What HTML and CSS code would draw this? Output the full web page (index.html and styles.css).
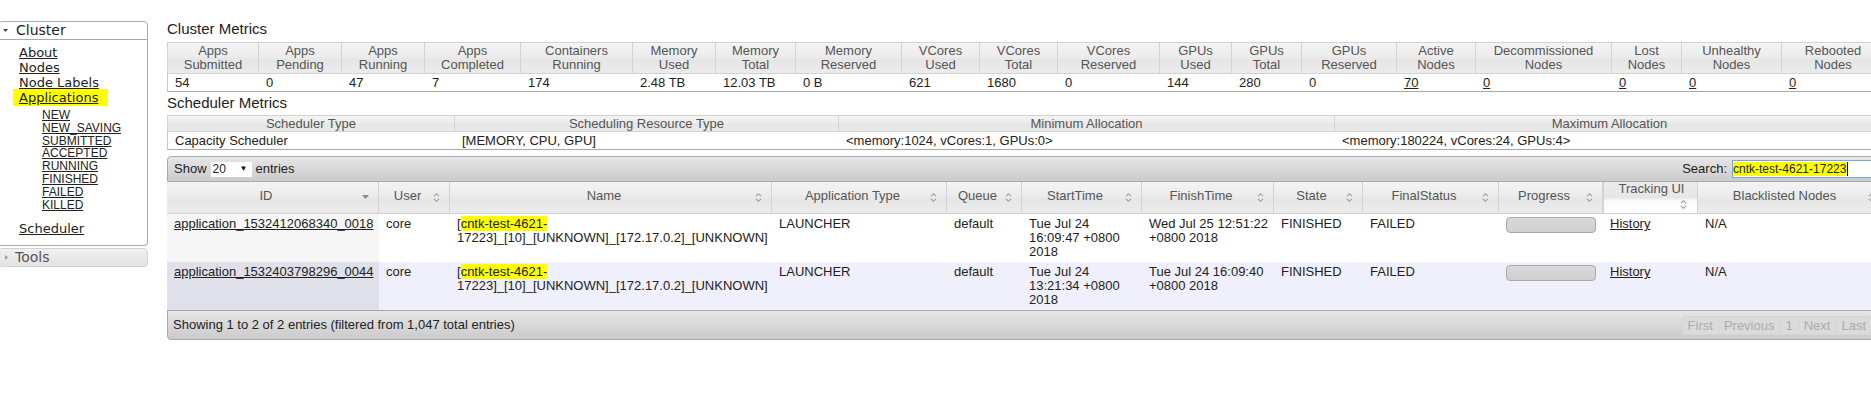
FILE: index.html
```html
<!DOCTYPE html>
<html>
<head>
<meta charset="utf-8">
<title>All Applications</title>
<link rel="stylesheet" href="styles.css">
</head>
<body>
<div class="page">
  <nav class="nav">
    <div class="acc-head open"><span class="tri"><svg width="5" height="3" viewBox="0 0 5 3"><polygon points="0,0 5,0 2.5,3" fill="#444"/></svg></span>Cluster</div>
    <div class="acc-body">
      <ul class="nav-main">
        <li><a href="#">About</a></li>
        <li><a href="#">Nodes</a></li>
        <li><a href="#">Node Labels</a></li>
        <li><a href="#" class="hl">Applications</a>
          <ul class="nav-sub">
            <li><a href="#">NEW</a></li>
            <li><a href="#">NEW_SAVING</a></li>
            <li><a href="#">SUBMITTED</a></li>
            <li><a href="#">ACCEPTED</a></li>
            <li><a href="#">RUNNING</a></li>
            <li><a href="#">FINISHED</a></li>
            <li><a href="#">FAILED</a></li>
            <li><a href="#">KILLED</a></li>
          </ul>
        </li>
        <li class="sched"><a href="#">Scheduler</a></li>
      </ul>
    </div>
    <div class="acc-head closed"><span class="tri"><svg width="3" height="5" viewBox="0 0 3 5"><polygon points="0,0 3,2.5 0,5" fill="#999"/></svg></span>Tools</div>
  </nav>

  <main class="main">
    <h3 class="title">Cluster Metrics</h3>
    <table class="metrics cluster">
      <colgroup>
        <col style="width:92px"><col style="width:83px"><col style="width:83px"><col style="width:96px"><col style="width:112px"><col style="width:83px"><col style="width:80px"><col style="width:106px"><col style="width:78px"><col style="width:78px"><col style="width:102px"><col style="width:72px"><col style="width:70px"><col style="width:95px"><col style="width:79px"><col style="width:136px"><col style="width:70px"><col style="width:100px"><col style="width:103px">
      </colgroup>
      <thead>
        <tr>
          <th>Apps<br>Submitted</th><th>Apps<br>Pending</th><th>Apps<br>Running</th><th>Apps<br>Completed</th><th>Containers<br>Running</th><th>Memory<br>Used</th><th>Memory<br>Total</th><th>Memory<br>Reserved</th><th>VCores<br>Used</th><th>VCores<br>Total</th><th>VCores<br>Reserved</th><th>GPUs<br>Used</th><th>GPUs<br>Total</th><th>GPUs<br>Reserved</th><th>Active<br>Nodes</th><th>Decommissioned<br>Nodes</th><th>Lost<br>Nodes</th><th>Unhealthy<br>Nodes</th><th>Rebooted<br>Nodes</th>
        </tr>
      </thead>
      <tbody>
        <tr>
          <td>54</td><td>0</td><td>47</td><td>7</td><td>174</td><td>2.48 TB</td><td>12.03 TB</td><td>0 B</td><td>621</td><td>1680</td><td>0</td><td>144</td><td>280</td><td>0</td><td><a href="#">70</a></td><td><a href="#">0</a></td><td><a href="#">0</a></td><td><a href="#">0</a></td><td><a href="#">0</a></td>
        </tr>
      </tbody>
    </table>

    <h3 class="title title2">Scheduler Metrics</h3>
    <table class="metrics sched">
      <colgroup>
        <col style="width:288px"><col style="width:384px"><col style="width:496px"><col style="width:550px">
      </colgroup>
      <thead>
        <tr><th>Scheduler Type</th><th>Scheduling Resource Type</th><th>Minimum Allocation</th><th>Maximum Allocation</th></tr>
      </thead>
      <tbody>
        <tr><td>Capacity Scheduler</td><td>[MEMORY, CPU, GPU]</td><td>&lt;memory:1024, vCores:1, GPUs:0&gt;</td><td>&lt;memory:180224, vCores:24, GPUs:4&gt;</td></tr>
      </tbody>
    </table>

    <div class="dt">
      <div class="bar bar-top">
        <div class="len">Show <span class="sel"><span>20</span><span class="sel-arrow">&#9660;</span></span> entries</div>
        <div class="filter">Search: <span class="search"><span class="search-text">cntk-test-4621-17223</span><span class="caret"></span></span></div>
      </div>
      <table class="apps">
        <colgroup>
          <col style="width:212px"><col style="width:71px"><col style="width:322px"><col style="width:175px"><col style="width:75px"><col style="width:120px"><col style="width:132px"><col style="width:89px"><col style="width:136px"><col style="width:104px"><col style="width:95px"><col style="width:187px">
        </colgroup>
        <thead>
          <tr>
            <th>ID<span class="sort"><svg width="7" height="4" viewBox="0 0 7 4"><polygon points="0,0 7,0 3.5,4" fill="#8a8a8a"/></svg></span></th>
            <th>User<span class="sort"><svg width="7" height="11" viewBox="0 0 7 11"><path d="M1 4.2 L3.5 1.7 L6 4.2 M1 6.8 L3.5 9.3 L6 6.8" stroke="#9c9c9c" stroke-width="1.1" fill="none"/></svg></span></th>
            <th>Name<span class="sort"><svg width="7" height="11" viewBox="0 0 7 11"><path d="M1 4.2 L3.5 1.7 L6 4.2 M1 6.8 L3.5 9.3 L6 6.8" stroke="#9c9c9c" stroke-width="1.1" fill="none"/></svg></span></th>
            <th>Application Type<span class="sort"><svg width="7" height="11" viewBox="0 0 7 11"><path d="M1 4.2 L3.5 1.7 L6 4.2 M1 6.8 L3.5 9.3 L6 6.8" stroke="#9c9c9c" stroke-width="1.1" fill="none"/></svg></span></th>
            <th>Queue<span class="sort"><svg width="7" height="11" viewBox="0 0 7 11"><path d="M1 4.2 L3.5 1.7 L6 4.2 M1 6.8 L3.5 9.3 L6 6.8" stroke="#9c9c9c" stroke-width="1.1" fill="none"/></svg></span></th>
            <th>StartTime<span class="sort"><svg width="7" height="11" viewBox="0 0 7 11"><path d="M1 4.2 L3.5 1.7 L6 4.2 M1 6.8 L3.5 9.3 L6 6.8" stroke="#9c9c9c" stroke-width="1.1" fill="none"/></svg></span></th>
            <th>FinishTime<span class="sort"><svg width="7" height="11" viewBox="0 0 7 11"><path d="M1 4.2 L3.5 1.7 L6 4.2 M1 6.8 L3.5 9.3 L6 6.8" stroke="#9c9c9c" stroke-width="1.1" fill="none"/></svg></span></th>
            <th>State<span class="sort"><svg width="7" height="11" viewBox="0 0 7 11"><path d="M1 4.2 L3.5 1.7 L6 4.2 M1 6.8 L3.5 9.3 L6 6.8" stroke="#9c9c9c" stroke-width="1.1" fill="none"/></svg></span></th>
            <th>FinalStatus<span class="sort"><svg width="7" height="11" viewBox="0 0 7 11"><path d="M1 4.2 L3.5 1.7 L6 4.2 M1 6.8 L3.5 9.3 L6 6.8" stroke="#9c9c9c" stroke-width="1.1" fill="none"/></svg></span></th>
            <th>Progress<span class="sort"><svg width="7" height="11" viewBox="0 0 7 11"><path d="M1 4.2 L3.5 1.7 L6 4.2 M1 6.8 L3.5 9.3 L6 6.8" stroke="#9c9c9c" stroke-width="1.1" fill="none"/></svg></span></th>
            <th class="trk">Tracking UI<span class="sort"><svg width="7" height="11" viewBox="0 0 7 11"><path d="M1 4.2 L3.5 1.7 L6 4.2 M1 6.8 L3.5 9.3 L6 6.8" stroke="#9c9c9c" stroke-width="1.1" fill="none"/></svg></span></th>
            <th>Blacklisted Nodes<span class="sort"><svg width="7" height="11" viewBox="0 0 7 11"><path d="M1 4.2 L3.5 1.7 L6 4.2 M1 6.8 L3.5 9.3 L6 6.8" stroke="#9c9c9c" stroke-width="1.1" fill="none"/></svg></span></th>
          </tr>
        </thead>
        <tbody>
          <tr class="odd">
            <td class="sorted"><a href="#">application_1532412068340_0018</a></td>
            <td>core</td>
            <td>[<span class="mark">cntk-test-4621-</span><wbr>17223]_[10]_[UNKNOWN]_[172.17.0.2]_[UNKNOWN]</td>
            <td>LAUNCHER</td>
            <td>default</td>
            <td>Tue Jul 24 16:09:47 +0800 2018</td>
            <td>Wed Jul 25 12:51:22 +0800 2018</td>
            <td>FINISHED</td>
            <td>FAILED</td>
            <td><div class="progress"></div></td>
            <td><a href="#">History</a></td>
            <td>N/A</td>
          </tr>
          <tr class="even">
            <td class="sorted"><a href="#">application_1532403798296_0044</a></td>
            <td>core</td>
            <td>[<span class="mark">cntk-test-4621-</span><wbr>17223]_[10]_[UNKNOWN]_[172.17.0.2]_[UNKNOWN]</td>
            <td>LAUNCHER</td>
            <td>default</td>
            <td>Tue Jul 24 13:21:34 +0800 2018</td>
            <td>Tue Jul 24 16:09:40 +0800 2018</td>
            <td>FINISHED</td>
            <td>FAILED</td>
            <td><div class="progress"></div></td>
            <td><a href="#">History</a></td>
            <td>N/A</td>
          </tr>
        </tbody>
      </table>
      <div class="bar bar-bottom">
        <div class="info">Showing 1 to 2 of 2 entries (filtered from 1,047 total entries)</div>
        <div class="pager"><span>First</span><span>Previous</span><span>1</span><span>Next</span><span>Last</span></div>
      </div>
    </div>
  </main>
</div>
</body>
</html>
```
FILE: styles.css
```css
html { overflow: hidden; }
body {
  margin: 0;
  background: #fff;
  color: #222;
  font-family: "Liberation Sans", Arial, sans-serif;
  font-size: 13px;
}
a { color: #222; text-decoration: underline; }

.page {
  display: flex;
  align-items: flex-start;
}

/* ---------- navigation ---------- */
.nav {
  flex: 0 0 150px;
  margin: 21px 0 0 -2px;
  font-family: "DejaVu Sans", Verdana, sans-serif;
}
.acc-head {
  box-sizing: border-box;
  height: 19px;
  line-height: 17px;
  font-size: 14px;
  padding-left: 4px;
  border: 1px solid #aaa;
  border-radius: 4px 4px 0 0;
  background: #fff;
  color: #222;
  display: flex;
  align-items: center;
}
.acc-head .tri {
  display: inline-flex;
  width: 5px;
  margin-right: 8px;
  align-items: center;
  justify-content: center;
}
.acc-head.closed {
  margin-top: 2px;
  border-color: #d3d3d3;
  border-radius: 4px;
  color: #555;
  background: linear-gradient(#f0f0f0, #e3e3e3);
  padding-left: 6px;
}
.acc-head.closed .tri { width: 3px; margin-right: 7px; }
.acc-body {
  border: 1px solid #aaa;
  border-top: 0;
  border-radius: 0 0 4px 4px;
  padding: 5px 0 9px 20px;
}
.nav-main, .nav-sub {
  list-style: none;
  margin: 0;
  padding: 0;
}
.nav-main > li {
  font-size: 13px;
  line-height: 15px;
}
.hl {
  background: #ffff00;
  padding: 1px 10px 1px 6px;
  margin-left: -6px;
}
.nav-sub {
  margin-top: 4px;
  padding-left: 23px;
  font-family: "Liberation Sans", Arial, sans-serif;
}
.nav-sub li {
  font-size: 12px;
  line-height: 12.8px;
}
.nav-main > li.sched { margin-top: 10px; }

/* ---------- main ---------- */
.main {
  flex: 0 0 1718px;
  margin-left: 19px;
  padding-top: 20px;
}
.title {
  margin: 0;
  font-size: 15px;
  line-height: 17px;
  font-weight: normal;
  color: #222;
}
.title2 { margin-top: 2px; }

.metrics {
  width: 1718px;
  table-layout: fixed;
  border-collapse: separate;
  border-spacing: 0;
  margin-top: 5px;
}
.metrics.sched { margin-top: 4px; }
.metrics th {
  font-weight: normal;
  color: #555;
  line-height: 14px;
  padding: 1px 4px;
  text-align: center;
  border-top: 1px solid #d3d3d3;
  border-right: 1px solid #d3d3d3;
  border-bottom: 1px solid #d3d3d3;
  background: linear-gradient(#f4f4f4 0%, #ececec 45%, #e6e6e6 55%, #ebebeb 100%);
}
.metrics th:first-child { border-left: 1px solid #d3d3d3; }
.metrics.sched th { padding: 1px 4px 0; }
.metrics td {
  line-height: 14px;
  padding: 2px 4px 1px 7px;
  text-align: left;
  border-bottom: 1px solid #a8a8a8;
  white-space: nowrap;
}
.metrics td:first-child { border-left: 1px solid #c8c8c8; }

/* ---------- data table ---------- */
.dt {
  width: 1718px;
  margin-top: 6px;
}
.bar {
  box-sizing: border-box;
  display: flex;
  justify-content: space-between;
  align-items: center;
  border: 1px solid #aaa;
  background: linear-gradient(#e6e6e6, #cbcbcb);
  color: #222;
  line-height: 14px;
}
.bar-top {
  height: 26px;
  border-radius: 4px 4px 0 0;
  padding: 0 0 0 6px;
}
.bar-bottom {
  height: 30px;
  border-radius: 0 0 4px 4px;
  padding: 0 12px 0 5px;
}
.len { display: flex; align-items: center; }
.sel {
  display: inline-flex;
  align-items: center;
  justify-content: space-between;
  width: 41px;
  height: 15px;
  margin: 0 4px;
  padding: 0 4px 0 2px;
  box-sizing: border-box;
  background: #fff;
  font-size: 12px;
}
.sel-arrow { font-size: 8px; color: #111; }
.filter { display: flex; align-items: center; }
.search {
  display: inline-flex;
  align-items: center;
  box-sizing: border-box;
  width: 152px;
  height: 18px;
  margin-left: 5px;
  border: 1px solid #7aa6d8;
  border-right: 0;
  background: #fff;
  font-size: 12px;
}
.search-text { background: #ffff00; padding-right: 1px; }
.caret { width: 1px; height: 14px; background: #000; }

.apps {
  width: 1718px;
  table-layout: fixed;
  border-collapse: separate;
  border-spacing: 0;
}
.apps th {
  font-weight: normal;
  color: #555;
  line-height: 14px;
  text-align: center;
  vertical-align: middle;
  padding: 0 5px 1px 8px;
  border-right: 1px solid #d3d3d3;
  border-bottom: 1px solid #d3d3d3;
  background: linear-gradient(#f4f4f4 0%, #ececec 45%, #e6e6e6 55%, #ebebeb 100%);
}
.apps th.trk {
  vertical-align: top;
  padding-right: 6px;
  background: linear-gradient(#ececec 0%, #e6e6e6 50%, #fafafa 60%, #ffffff 100%);
  border-left: 1px solid #d3d3d3;
}
.sort {
  float: right;
  width: 16px;
  height: 16px;
  display: flex;
  align-items: center;
  justify-content: center;
}
.apps td {
  line-height: 14px;
  padding: 3px 3px 3px 7px;
  vertical-align: top;
  text-align: left;
  color: #222;
}
.apps tr.odd td { background: #fff; }
.apps tr.odd td.sorted { background: #f6f6f6; }
.apps tr.even td { background: #f0f0fc; }
.apps tr.even td.sorted { background: #e0e0ea; }
.mark { background: #ffff00; }
.progress {
  box-sizing: border-box;
  width: 90px;
  height: 16px;
  border: 1px solid #aaa;
  border-radius: 4px;
  background: linear-gradient(#dadada, #cfcfcf);
}

.pager { display: flex; }
.pager span {
  padding: 2px 5px 1px;
  border: 1px solid #d6d6d6;
  margin-left: -1px;
  background: #dbdbdb;
  color: #ababab;
}
.pager span:first-child { border-radius: 3px 0 0 3px; }
.pager span:last-child { border-radius: 0 3px 3px 0; }
```
